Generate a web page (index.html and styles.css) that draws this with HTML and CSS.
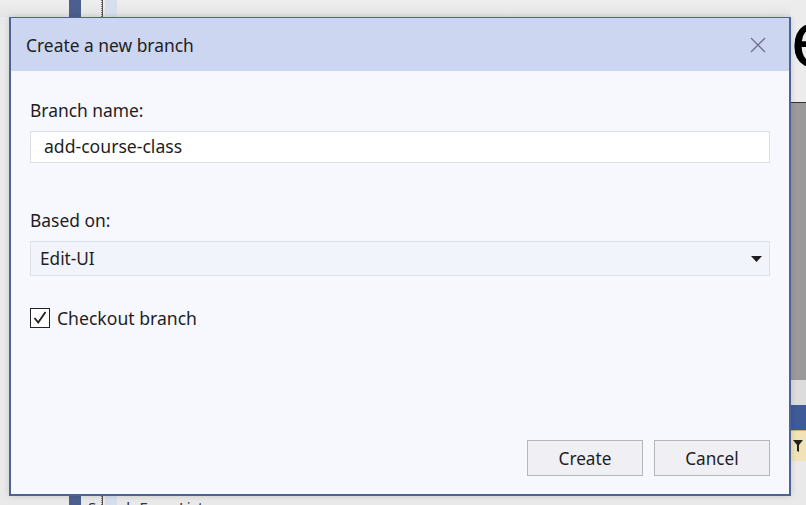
FILE: index.html
```html
<!DOCTYPE html>
<html>
<head>
<meta charset="utf-8">
<link rel="stylesheet" href="styles.css">
</head>
<body>
<div class="backdrop">
  <div class="bg-top"></div>
  <div class="bg-strip-blue"></div>
  <div class="bg-dots"></div>
  <div class="bg-strip-light"></div>
  <div class="bg-right">
    <div class="r-top"><span class="r-glyph">e</span></div>
    <div class="r-gray"></div>
    <div class="r-light"></div>
    <div class="r-blue"></div>
    <div class="r-yellow"><svg class="r-icon" width="12" height="14" viewBox="0 0 12 14"><path d="M1 1 H11 L7 6 V13 L5 12 V6 Z" fill="#222"/></svg></div>
    <div class="r-bottom"></div>
  </div>
  <div class="bg-bottom-text">Search Error List</div>
</div>

<div class="dialog">
  <div class="titlebar">
    <span class="title">Create a new branch</span>
    <svg class="close" width="16" height="16" viewBox="0 0 16 16"><path d="M1 1 L15 15 M15 1 L1 15" stroke="#6e7190" stroke-width="1.3" fill="none"/></svg>
  </div>
  <div class="body">
    <label class="label">Branch name:</label>
    <div class="input">add-course-class</div>
    <label class="label label-based">Based on:</label>
    <div class="select">
      <span>Edit-UI</span>
      <svg class="arrow" width="11" height="6" viewBox="0 0 11 6"><path d="M0 0 H11 L5.5 6 Z" fill="#1e1e1e"/></svg>
    </div>
    <div class="check-row">
      <span class="checkbox"><svg width="16" height="16" viewBox="0 0 16 16"><path d="M2.5 8 L6.2 12.5 L13.5 2" stroke="#1e1e1e" stroke-width="1.8" fill="none"/></svg></span>
      <span class="check-label">Checkout branch</span>
    </div>
    <div class="spacer"></div>
    <div class="buttons">
      <button class="btn">Create</button>
      <button class="btn">Cancel</button>
    </div>
  </div>
</div>
</body>
</html>
```

FILE: styles.css
```css
* { box-sizing: border-box; }
html, body { margin: 0; padding: 0; }
body {
  width: 806px; height: 505px; overflow: hidden; position: relative;
  background: #e9e9e9;
  font-family: "Noto Sans", "Open Sans", sans-serif;
  color: #1e1e1e;
}
.backdrop { position: absolute; inset: 0; }
.bg-top { position: absolute; left: 0; top: 0; width: 806px; height: 17px; background: linear-gradient(#eeeeee, #e4e4e4); }
.bg-strip-blue { position: absolute; left: 69px; top: 0; width: 12px; height: 505px; background: #4d5f8e; }
.bg-dots { position: absolute; left: 101px; top: 0; width: 2px; height: 505px; border-left: 1px dotted #777; border-right: 1px solid #555; }
.bg-strip-light { position: absolute; left: 105px; top: 0; width: 12px; height: 505px; background: #d6e0ec; }
.bg-right { position: absolute; left: 790px; top: 0; width: 16px; height: 505px; display: flex; flex-direction: column; }
.r-top { height: 103px; background: #ececec; border-bottom: 1px solid #333; overflow: hidden; position: relative; }
.r-glyph { position: absolute; left: 0px; top: -4px; font-size: 80px; line-height: 1; color: #000; font-family: "Noto Sans", sans-serif; }
.r-gray { height: 277px; background: #9a9a9a; }
.r-light { height: 25px; background: #dcdcdc; }
.r-blue { height: 25px; background: #3e5b98; }
.r-yellow { height: 31px; background: #f1e3b6; border-top: 1px solid #c8b27a; position: relative; overflow: hidden; }
.r-icon { position: absolute; left: 2px; top: 8px; }
.r-bottom { flex: 1; background: #e9e9e9; }
.bg-bottom-text { position: absolute; left: 88px; top: 497px; font-size: 15px; color: #333; }

.dialog {
  position: absolute; left: 9px; top: 17px; width: 782px; height: 479px;
  border: 1px solid #4c6495; border-width: 1px 2px 2px 2px;
  background: #f7f8fe;
  display: flex; flex-direction: column;
  box-shadow: 0 0 6px rgba(0,0,0,0.15);
}
.titlebar {
  height: 53px; background: #ccd6f1;
  display: flex; align-items: center; justify-content: space-between;
  padding: 0 23px 0 15px;
}
.title { font-size: 17.4px; color: #1e1e1e; }
.close { display: block; }
.body {
  flex: 1; display: flex; flex-direction: column;
  padding: 27px 19px 18px 19px;
}
.label { font-size: 17.4px; line-height: 24px; display: block; }
.input {
  margin-top: 9px; height: 32px; background: #ffffff; border: 1px solid #dcdfe6;
  padding-left: 13px; font-size: 17.6px; line-height: 29px;
}
.label-based { margin-top: 45px; }
.select {
  margin-top: 9px; height: 35px; background: #f1f4fb; border: 1px solid #dde1ea;
  padding: 0 7px 0 9px; font-size: 17.2px;
  display: flex; align-items: center; justify-content: space-between;
}
.check-row { margin-top: 30px; height: 24px; display: flex; align-items: center; }
.checkbox {
  width: 20px; height: 20px; border: 1.5px solid #222; background: #fff;
  display: flex; align-items: center; justify-content: center;
}
.check-label { margin-left: 7px; font-size: 17.6px; }
.spacer { flex: 1; }
.buttons { display: flex; justify-content: flex-end; gap: 11px; }
.btn {
  width: 116px; height: 36px; background: #efeff4; border: 1px solid #b6b6b8;
  font-family: inherit; font-size: 17.2px; color: #1e1e1e; padding: 0;
}
```
